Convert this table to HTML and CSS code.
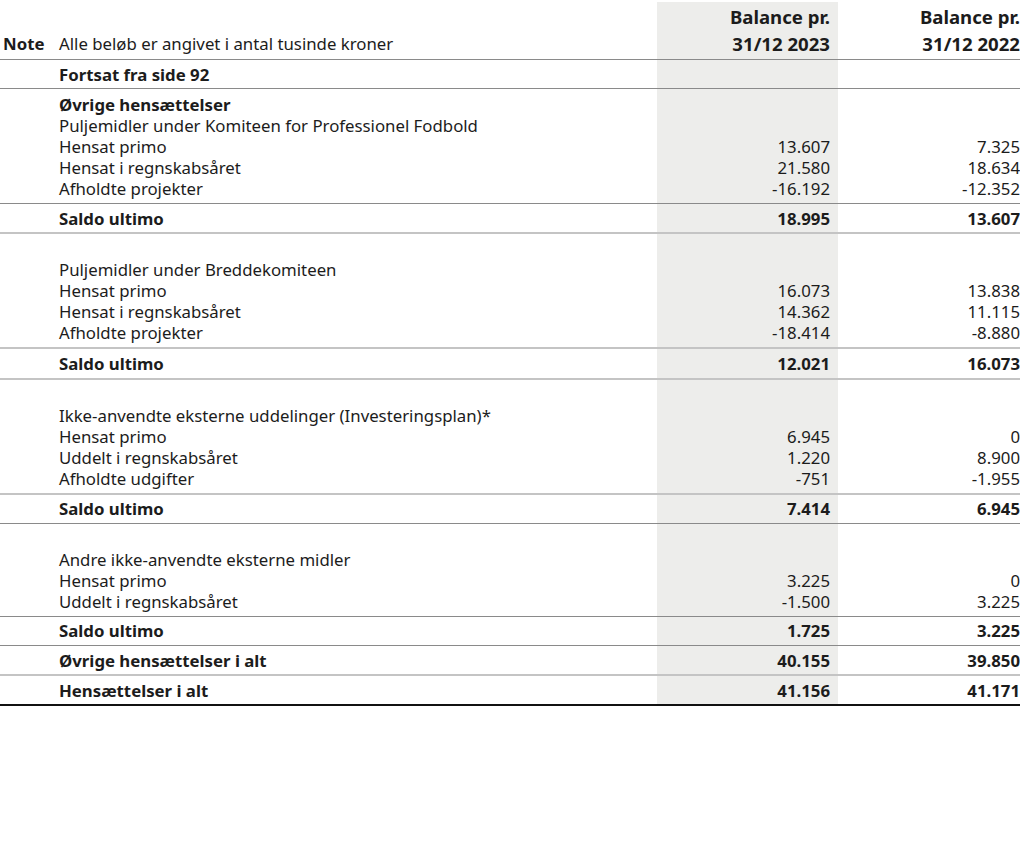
FILE: index.html
```html
<!DOCTYPE html>
<html lang="da">
<head>
<meta charset="utf-8">
<link rel="stylesheet" href="styles.css">
</head>
<body>
<table class="fin">
  <colgroup>
    <col class="c-note"><col class="c-desc"><col class="c-y1"><col class="c-y2">
  </colgroup>
  <thead>
    <tr class="head line-dark">
      <th class="note">Note</th>
      <th class="desc">Alle beløb er angivet i antal tusinde kroner</th>
      <th class="y1">Balance pr.<br>31/12 2023</th>
      <th class="y2">Balance pr.<br>31/12 2022</th>
    </tr>
  </thead>
  <tbody>
    <tr class="boxed bold line-dark">
      <td></td><td class="desc">Fortsat fra side 92</td><td class="y1"></td><td class="y2"></td>
    </tr>

    <tr class="first"><td></td><td class="desc bold">Øvrige hensættelser</td><td class="y1"></td><td class="y2"></td></tr>
    <tr><td></td><td class="desc">Puljemidler under Komiteen for Professionel Fodbold</td><td class="y1"></td><td class="y2"></td></tr>
    <tr><td></td><td class="desc">Hensat primo</td><td class="y1">13.607</td><td class="y2">7.325</td></tr>
    <tr><td></td><td class="desc">Hensat i regnskabsåret</td><td class="y1">21.580</td><td class="y2">18.634</td></tr>
    <tr class="last line-dark"><td></td><td class="desc">Afholdte projekter</td><td class="y1">-16.192</td><td class="y2">-12.352</td></tr>
    <tr class="boxed bold line-light"><td></td><td class="desc">Saldo ultimo</td><td class="y1">18.995</td><td class="y2">13.607</td></tr>

    <tr class="first gap"><td></td><td class="desc">Puljemidler under Breddekomiteen</td><td class="y1"></td><td class="y2"></td></tr>
    <tr><td></td><td class="desc">Hensat primo</td><td class="y1">16.073</td><td class="y2">13.838</td></tr>
    <tr><td></td><td class="desc">Hensat i regnskabsåret</td><td class="y1">14.362</td><td class="y2">11.115</td></tr>
    <tr class="last line-light"><td></td><td class="desc">Afholdte projekter</td><td class="y1">-18.414</td><td class="y2">-8.880</td></tr>
    <tr class="boxed bold line-light"><td></td><td class="desc">Saldo ultimo</td><td class="y1">12.021</td><td class="y2">16.073</td></tr>

    <tr class="first gap"><td></td><td class="desc">Ikke-anvendte eksterne uddelinger (Investeringsplan)*</td><td class="y1"></td><td class="y2"></td></tr>
    <tr><td></td><td class="desc">Hensat primo</td><td class="y1">6.945</td><td class="y2">0</td></tr>
    <tr><td></td><td class="desc">Uddelt i regnskabsåret</td><td class="y1">1.220</td><td class="y2">8.900</td></tr>
    <tr class="last line-light"><td></td><td class="desc">Afholdte udgifter</td><td class="y1">-751</td><td class="y2">-1.955</td></tr>
    <tr class="boxed bold line-dark"><td></td><td class="desc">Saldo ultimo</td><td class="y1">7.414</td><td class="y2">6.945</td></tr>

    <tr class="first gap"><td></td><td class="desc">Andre ikke-anvendte eksterne midler</td><td class="y1"></td><td class="y2"></td></tr>
    <tr><td></td><td class="desc">Hensat primo</td><td class="y1">3.225</td><td class="y2">0</td></tr>
    <tr class="last line-dark"><td></td><td class="desc">Uddelt i regnskabsåret</td><td class="y1">-1.500</td><td class="y2">3.225</td></tr>
    <tr class="boxed bold line-dark"><td></td><td class="desc">Saldo ultimo</td><td class="y1">1.725</td><td class="y2">3.225</td></tr>

    <tr class="boxed bold line-light"><td></td><td class="desc">Øvrige hensættelser i alt</td><td class="y1">40.155</td><td class="y2">39.850</td></tr>
    <tr class="boxed bold line-black"><td></td><td class="desc">Hensættelser i alt</td><td class="y1">41.156</td><td class="y2">41.171</td></tr>
  </tbody>
</table>
</body>
</html>
```

FILE: styles.css
```css
html, body {
  margin: 0;
  padding: 0;
  background: #ffffff;
}

body {
  font-family: "Noto Sans", "Open Sans", sans-serif;
  font-size: 16.8px;
  color: #1c1c1c;
}

.fin {
  margin-top: 2px;
  width: 1020px;
  border-collapse: collapse;
  table-layout: fixed;
}

.c-note { width: 58px; }
.c-desc { width: 599px; }
.c-y1 { width: 181px; }
.c-y2 { width: 182px; }

.fin th,
.fin td {
  padding: 0;
  line-height: 21px;
  vertical-align: middle;
  text-align: left;
  font-weight: 400;
  white-space: nowrap;
}

.fin .desc { padding-left: 1px; }

.fin .y1 {
  background: #ededeb;
  text-align: right;
  padding-right: 8px;
}

.fin .y2 {
  text-align: right;
}

/* header */
.head th {
  vertical-align: bottom;
  padding-top: 1px;
  padding-bottom: 2px;
}
.head .y1,
.head .y2 {
  font-weight: 700;
  font-size: 18.6px;
  line-height: 27px;
}
.head .note {
  font-weight: 700;
  padding-left: 3px;
  line-height: 27px;
}
.head .desc {
  line-height: 27px;
}

.bold td,
td.bold {
  font-weight: 700;
}

.boxed td {
  padding-top: 3.6px;
  padding-bottom: 3.6px;
}

.first td { padding-top: 5px; }
.first.gap td { padding-top: 25px; }
.last td { padding-bottom: 4px; }

.line-dark th,
.line-dark td { border-bottom: 1px solid #8a8a8a; }
.line-light td { border-bottom: 2px solid #c4c4c4; }
.line-black td { border-bottom: 2px solid #111111; }
```
